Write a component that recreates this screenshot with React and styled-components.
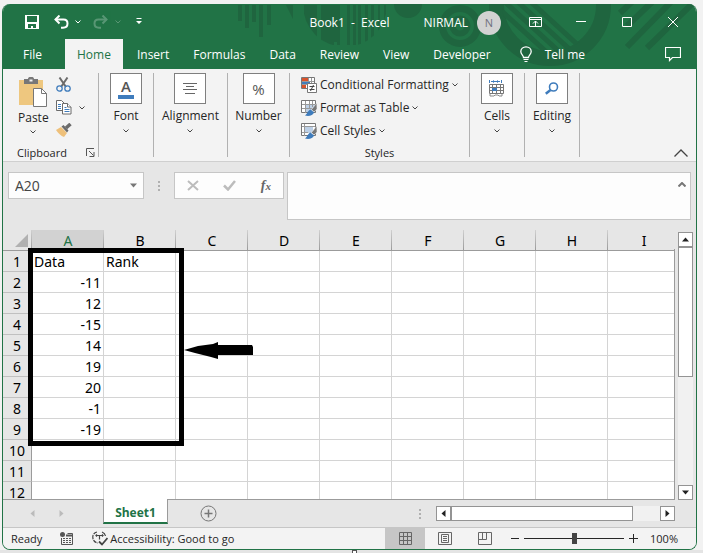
import React from "react";
import styled, { createGlobalStyle } from "styled-components";

const GlobalStyle = createGlobalStyle`
  * {
    box-sizing: border-box;
  }
  body {
    margin: 0;
    background: #f0f0f0;
    font-family: "Open Sans", "Noto Sans", sans-serif;
    font-size: 12px;
    color: #262626;
  }
  button, input, textarea {
    font: inherit;
    color: inherit;
    margin: 0;
    padding: 0;
    border: 0;
    background: none;
    outline: none;
  }
  button {
    display: flex;
    align-items: center;
    justify-content: center;
    white-space: nowrap;
  }
  svg {
    display: block;
    flex: none;
  }
`;

const Desktop = styled.div`
  position: relative;
  display: flex;
  height: 100vh;
  padding: 4px 6px 0 2px;
  background: #f2f2f2;
  border-bottom: 3px solid #e4e4e4;
`;

const Window = styled.div`
  flex: 1;
  min-width: 0;
  display: flex;
  flex-direction: column;
  border: 1px solid #217346;
  border-top: 0;
  border-radius: 8px;
  overflow: hidden;
  background: #e6e6e6;
`;

const Header = styled.header`
  position: relative;
  background: #217346;
  color: white;
`;

const Pattern = styled.svg`
  position: absolute;
  top: 0;
  right: 0;
`;

const TitleBar = styled.div`
  position: relative;
  display: grid;
  grid-template-columns: 1fr auto 1fr;
  align-items: center;
  height: 35px;
`;

const QuickAccess = styled.div`
  display: flex;
  align-items: center;
  padding-left: 22px;
`;

const IconButton = styled.button`
  width: ${(props) => props.$w || 16}px;
  height: 20px;
  margin-left: ${(props) => props.$ml || 0}px;
  opacity: ${(props) => (props.disabled ? 0.25 : 1)};
`;

const DocTitle = styled.h1`
  margin: 0;
  padding-top: 2px;
  font-size: 12px;
  font-weight: 400;
  white-space: pre;
`;

const WindowControls = styled.div`
  display: flex;
  align-items: center;
  justify-content: flex-end;
  padding-right: 15px;
`;

const UserName = styled.span`
  padding-top: 2px;
`;

const Avatar = styled.span`
  display: flex;
  align-items: center;
  justify-content: center;
  width: 24px;
  height: 24px;
  margin: 2px 26px 0 9px;
  border-radius: 50%;
  background: #d2d2d2;
  color: #707080;
  font-size: 11px;
`;

const Tabs = styled.nav`
  position: relative;
  display: flex;
  align-items: stretch;
  height: 30px;
  padding-left: 8px;
`;

const Tab = styled.button`
  padding: 0 12px;
  margin: ${(props) => (props.$active ? "0 2px 0 11px" : "0")};
  background: ${(props) => (props.$active ? "#f3f3f3" : "none")};
  color: ${(props) => (props.$active ? "#217346" : "white")};
`;

const TellMe = styled.button`
  gap: 13px;
  margin-left: 17px;
`;

const CommentButton = styled.button`
  margin-left: auto;
  padding-right: 15px;
`;

const Ribbon = styled.section`
  display: flex;
  height: 93px;
  padding: 4px 0;
  background: #f3f3f3;
  border-bottom: 1px solid #cfcfcf;
`;

const Group = styled.div`
  display: flex;
  flex-direction: column;
  align-items: center;
  width: ${(props) => props.$w}px;
  border-right: 1px solid #b1b1b1;
`;

const BigButton = styled.button`
  flex-direction: column;
  line-height: 16px;
`;

const IconBox = styled.span`
  display: flex;
  align-items: center;
  justify-content: center;
  width: 32px;
  height: 31px;
  margin-bottom: 4px;
  border: 1px solid #7f7f7f;
  background: white;
`;

const CaretWrap = styled.span`
  display: flex;
  align-items: center;
  height: 14px;
`;

const ClipboardTools = styled.div`
  display: flex;
  align-self: stretch;
  align-items: flex-start;
  padding-left: 15px;
  gap: 7px;
`;

const PasteButton = styled(BigButton)`
  padding-top: 4px;
  svg {
    margin-bottom: 3px;
  }
`;

const ToolColumn = styled.div`
  display: flex;
  flex-direction: column;
  align-items: flex-start;
`;

const ToolButton = styled.button`
  height: 23px;
  gap: ${(props) => props.$gap || 3}px;
`;

const GroupLabel = styled.div`
  display: flex;
  align-items: center;
  justify-content: center;
  align-self: stretch;
  height: 14px;
  margin-top: auto;
  margin-bottom: -2px;
  padding-left: ${(props) => props.$pl || 0}px;
  font-size: 11px;
`;

const Launcher = styled.button`
  margin-left: auto;
  margin-right: 3px;
`;

const StyleList = styled(ToolColumn)`
  align-self: stretch;
  padding-left: 11px;
`;

const CollapseButton = styled.button`
  align-self: flex-end;
  margin-left: auto;
  padding-right: 8px;
`;

const FormulaRow = styled.div`
  display: flex;
  align-items: flex-start;
  height: 68px;
  padding: 10px 5px 0;
`;

const NameBox = styled.div`
  display: flex;
  width: 136px;
  height: 27px;
  border: 1px solid #c6c6c6;
  background: #fdfdfd;
  input {
    flex: 1;
    min-width: 0;
    padding-left: 6px;
    font-size: 14px;
    color: #444;
  }
  button {
    width: 20px;
  }
`;

const Dots = styled.span`
  display: flex;
  flex-direction: column;
  justify-content: center;
  gap: 2px;
  height: 27px;
  margin: 0 ${(props) => props.$mx || 0}px;
  i {
    width: 2px;
    height: 2px;
    background: #b0b0b0;
  }
`;

const FormulaButtons = styled.div`
  display: flex;
  align-items: center;
  justify-content: space-between;
  width: 110px;
  height: 27px;
  margin-right: 3px;
  padding: 0 12px;
  border: 1px solid #c6c6c6;
  background: #fdfdfd;
`;

const FxLabel = styled.button`
  font-family: "Liberation Serif", serif;
  font-size: 14px;
  font-style: italic;
  font-weight: 700;
  line-height: 20px;
  color: #666;
  sub {
    font-size: 11px;
    vertical-align: baseline;
  }
`;

const FormulaField = styled.div`
  flex: 1;
  display: flex;
  align-items: flex-start;
  height: 48px;
  border: 1px solid #c6c6c6;
  background: #fdfdfd;
  textarea {
    flex: 1;
    height: 46px;
    resize: none;
  }
  button {
    padding: 9px 4px;
  }
`;

const SheetArea = styled.main`
  position: relative;
  flex: 1;
  min-height: 0;
  display: flex;
`;

const GridClip = styled.div`
  flex: 1;
  min-width: 0;
  overflow: hidden;
  border: 0 solid #9b9b9b;
  border-width: 0 1px 1px 0;
  border-image: linear-gradient(#e6e6e6 20px, #9b9b9b 20px) 1;
`;

const Grid = styled.table`
  table-layout: fixed;
  width: 677px;
  border-spacing: 0;
  background: white;
  font-family: "Noto Sans", sans-serif;
  font-size: 14px;
  line-height: 19px;
  color: black;
`;

const ColHead = styled.th`
  width: ${(props) => props.$w || 72}px;
  height: 21px;
  padding: 1px 0 0;
  font-weight: 400;
  color: ${(props) => (props.$selected ? "#217346" : "black")};
  background: linear-gradient(#d0d0d0, #9b9b9b) right / 1px 100% no-repeat
    ${(props) => (props.$selected ? "#d2d2d2" : "#e6e6e6")};
  border-bottom: 1px solid #9b9b9b;
`;

const Corner = styled.div`
  width: 0;
  margin-left: 12px;
  border-left: 13px solid transparent;
  border-bottom: 13px solid #b1b1b1;
`;

const RowHead = styled.th`
  height: 21px;
  padding: 1px 0 0;
  font-weight: 400;
  background: #e6e6e6;
  border-right: 1px solid #9b9b9b;
  border-bottom: 1px solid #c0c0c0;
`;

const Cell = styled.td`
  height: 21px;
  padding: 1px 2px 0;
  text-align: ${(props) => (props.$number ? "right" : "left")};
  border-right: 1px solid #d4d4d4;
  border-bottom: 1px solid #d4d4d4;
`;

// annotation drawn over the two data columns
const Highlight = styled.div`
  position: absolute;
  left: 25px;
  top: 18px;
  width: 156px;
  height: 198px;
  border: 5px solid black;
`;

const Arrow = styled.svg`
  position: absolute;
  left: 180px;
  top: 112px;
`;

const VScroll = styled.div`
  display: flex;
  flex-direction: column;
  width: 15px;
  margin: 2px 3px 0;
  background: #f1f1f1;
`;

const HScroll = styled.div`
  display: flex;
  width: 239px;
  height: 15px;
  margin-left: 15px;
  background: #f1f1f1;
`;

const ScrollButton = styled.button`
  flex: none;
  width: 15px;
  height: 15px;
  border: 1px solid #949494;
  background: white;
`;

const Thumb = styled.div`
  flex: 0 0 ${(props) => props.$size}px;
  margin: ${(props) => (props.$vertical ? "0 0 auto" : "0 auto 0 0")};
  border: 1px solid #949494;
  background: white;
`;

const SheetBar = styled.div`
  display: flex;
  align-items: center;
  height: 28px;
  padding-right: 21px;
  border-bottom: 1px solid #c6c6c6;
`;

const SheetNav = styled.div`
  display: flex;
  gap: 22px;
  width: 100px;
  padding-left: 26px;
`;

const SheetTab = styled.button`
  position: relative;
  align-self: flex-start;
  width: 65px;
  height: 25px;
  margin-top: -1px;
  padding-top: 3px;
  border: 1px solid #9b9b9b;
  border-top: 0;
  border-bottom: 2px solid #217346;
  background: white;
  color: #217346;
  font-weight: 700;
`;

const AddSheet = styled.button`
  margin-left: 32px;
  margin-right: auto;
`;

const StatusBar = styled.footer`
  display: flex;
  align-items: center;
  height: 21px;
  padding: 0 18px 0 8px;
  background: #f3f3f3;
  font-size: 11px;
`;

const StatusButton = styled.button`
  gap: 2px;
  margin-left: 18px;
`;

const ViewButtons = styled.div`
  display: flex;
  margin-left: auto;
`;

const ViewButton = styled.button`
  width: 40px;
  height: 21px;
  background: ${(props) => (props.$active ? "#c6c6c6" : "none")};
`;

const Zoom = styled.div`
  display: flex;
  align-items: center;
  gap: 5px;
  margin: 0 12px 0 6px;
  input {
    appearance: none;
    width: 100px;
    height: 11px;
    background: linear-gradient(#262626, #262626) center / 100% 1px no-repeat;
  }
  input::-webkit-slider-thumb {
    appearance: none;
    width: 5px;
    height: 11px;
    background: #444;
  }
`;

const Handle = styled.i`
  position: absolute;
  bottom: -3px;
  left: 50%;
  width: 5px;
  height: 3px;
  border: 1px solid #555;
  border-bottom: 0;
  background: white;
`;

const Caret = ({ color = "#444" }) => (
  <svg width="6" height="4" viewBox="0 0 6 4">
    <path d="M0.5 0.5L3 3L5.5 0.5" fill="none" stroke={color} />
  </svg>
);

const Triangle = ({ dir, color = "#222", size = 7 }) => {
  const turn = { up: 0, right: 90, down: 180, left: 270 }[dir];
  return (
    <svg width={size} height={size} viewBox="0 0 7 7">
      <path d="M0 5.5L3.5 1.5L7 5.5z" fill={color} transform={`rotate(${turn} 3.5 3.5)`} />
    </svg>
  );
};

const UndoIcon = () => (
  <svg width="15" height="14" viewBox="0 0 15 14" fill="none" stroke="white" strokeWidth="2">
    <path d="M5.5 0.5L1.5 4.5L5.5 8.5" />
    <path d="M1.5 4.5H9.5C12.2 4.5 13.5 6.3 13.5 8.5C13.5 11 11.8 12.7 9 12.7H7" />
  </svg>
);

const RedoIcon = () => (
  <svg width="15" height="14" viewBox="0 0 15 14" fill="none" stroke="white" strokeWidth="2">
    <path d="M9.5 0.5L13.5 4.5L9.5 8.5" />
    <path d="M13.5 4.5H5.5C2.8 4.5 1.5 6.3 1.5 8.5C1.5 11 3.2 12.7 6 12.7H8" />
  </svg>
);

const HeaderPattern = () => (
  <Pattern width="461" height="65" viewBox="235 4 461 65" fill="#1f653f" stroke="none">
    <clipPath id="dome">
      <circle cx="345" cy="5" r="42" />
    </clipPath>
    <clipPath id="disc">
      <circle cx="550" cy="4" r="48" />
    </clipPath>
    <path d="M238 5h4v16h-4zM245 5h4v23h-4zM252 5h4v17h-4zM259 5h4v32h-4zM267 5h4v20h-4z" />
    <path d="M286 5h7v14z" />
    <path
      clipPath="url(#dome)"
      d="M304 5h13v40h-13zM321 5h13v40h-13zM337 5h3v40h-3zM347 5h3v40h-3zM353 5h3v40h-3zM358 5h3v40h-3zM365 5h3v40h-3zM371 5h3v40h-3zM378 5h2v40h-2zM384 5h2v40h-2z"
    />
    <path d="M327 5h13v37h-13z" />
    <circle cx="408" cy="4" r="14" />
    <g fill="none" stroke="#1f653f">
      <circle cx="460" cy="26" r="17.5" strokeWidth="7" />
      <circle cx="460" cy="26" r="7.5" strokeWidth="6" />
      <circle cx="550" cy="5" r="53.5" strokeWidth="15" />
      <g strokeWidth="5" clipPath="url(#disc)">
        <path d="M494 4l60 55M505 2l60 55M518 2l60 55M531 2l60 55" />
      </g>
      <g strokeWidth="6">
        <path d="M634 0L620 13M652 2L627 26M671 2L627 47M694 2L647 48" />
      </g>
    </g>
  </Pattern>
);

const PasteIcon = () => (
  <svg width="28" height="30" viewBox="0 0 28 30">
    <path d="M0 3h24v25H0z" fill="#eec77f" />
    <path d="M5 7V2h4c0-3 6-3 6 0h4v5z" fill="#777" />
    <path d="M10.500 2.500h3v2h-3z" fill="#f3f3f3" />
    <path d="M14.500 11.500h8l5 5v13h-13z" fill="white" stroke="#777" />
    <path d="M22.500 11.500v5h5" fill="none" stroke="#777" />
  </svg>
);

const CutIcon = () => (
  <svg width="15" height="15" viewBox="0 0 15 15" fill="none">
    <path d="M3.500 0.500L10 10M11.500 0.500L5 10" stroke="#6b6b6b" strokeWidth="2" />
    <circle cx="3.500" cy="11.500" r="2.700" stroke="#3f7cbc" strokeWidth="1.300" />
    <circle cx="11.500" cy="11.500" r="2.700" stroke="#3f7cbc" strokeWidth="1.300" />
  </svg>
);

const CopyIcon = () => (
  <svg width="16" height="15" viewBox="0 0 16 15" fill="white" stroke="#6b6b6b">
    <path d="M0.500 0.500h5l3 3v7h-8z" />
    <path d="M2 4.500h3M2 6.500h3M2 8.500h3" stroke="#3f7cbc" />
    <path d="M6.500 3.500h5l3.500 3.500v7h-8.500z" />
    <path d="M11.500 3.500v3.500h3.500" />
    <path d="M8.500 7.500h2M8.500 9.500h5M8.500 11.500h5" stroke="#3f7cbc" />
  </svg>
);

const PainterIcon = () => (
  <svg width="16" height="15" viewBox="0 0 16 15">
    <path d="M0 7L5 4L11 10L8 14C5 13 2 10 0 7z" fill="#eec07a" />
    <path d="M5.500 3.500L7.500 2L12.500 7.500L11 9.500z" fill="#6b6b6b" />
    <path d="M10 5L14.500 1" stroke="#6b6b6b" strokeWidth="3.500" />
  </svg>
);

const LauncherIcon = () => (
  <svg width="9" height="9" viewBox="0 0 9 9" fill="none" stroke="#555">
    <path d="M0.500 8V0.500H8M3 3L7.500 7.500M8 4v4.500H3.500" />
  </svg>
);

const FontIcon = styled.span`
  width: 16px;
  border-bottom: 4px solid #3f7cbc;
  font-size: 15px;
  font-weight: 600;
  line-height: 17px;
  text-align: center;
  color: #555;
`;

const AlignIcon = () => (
  <svg width="16" height="12" viewBox="0 0 16 12" stroke="#666">
    <path d="M1 0.500h14M4 3.500h8M1 6.500h14M3 10.500h10" />
  </svg>
);

const PercentIcon = styled.span`
  font-size: 15px;
  color: #555;
`;

const ConditionalIcon = () => (
  <svg width="16" height="16" viewBox="0 0 16 16">
    <path d="M0.500 0.500h13v11h-13z" fill="white" stroke="#777" />
    <path d="M1 1h6v3H1zM1 8h4v3H1z" fill="#d9532c" />
    <path d="M1 5h8v2H1z" fill="#3f7cbc" />
    <path d="M7.500 1v3M10.500 1v5M1 4.500h12M1 7.500h5" stroke="#999" />
    <path d="M6.500 6.500h9v9h-9z" fill="white" stroke="#777" />
    <path d="M8.500 9.500h5M8.500 12.500h5M12.500 8L9.500 14" stroke="#444" fill="none" />
  </svg>
);

const TableIcon = ({ cell }) => (
  <svg width="16" height="16" viewBox="0 0 16 16">
    <path d="M0.500 0.500h14v12h-14z" fill="white" stroke="#777" />
    {cell ? (
      <path d="M4 4h8v6H4z" fill="#bdd0e6" />
    ) : (
      <path d="M5 5h9v7H5z" fill="#bdd0e6" />
    )}
    <path
      d={cell ? "M1 3.500h13M3.500 1v12M1 9.500h6" : "M1 4.500h13M4.500 1v12M1 8.500h10M8.500 1v8M11.500 1v6"}
      stroke="#999"
    />
    <path d="M15.800 3L10.500 9.500L13 12L16 9z" fill="#777" stroke="#f3f3f3" strokeWidth="0.500" />
    <path d="M4 15.500C6.500 14 6.500 10.500 9.500 9.500L13 12.500C12 15.500 8 16.500 4 15.500z" fill="#3f7cbc" />
  </svg>
);

const CellsIcon = () => (
  <svg width="16" height="17" viewBox="0 0 16 17" fill="none">
    <path d="M0.500 0v3M12.500 0v3M2 1.500h9M5 0.500L3.500 1.500L5 2.500M8 0.500L9.500 1.500L8 2.500" stroke="#3f7cbc" />
    <path d="M0.500 4.500h14v9h-14zM0.500 7.500h14M0.500 10.500h14M3.500 4.500v9M7.500 4.500v9M11.500 4.500v9" stroke="#777" />
    <path d="M3 8h5v3H3z" fill="#3f7cbc" />
    <path d="M1 14v2h4l1-1h3l1 1h3v-2" stroke="#888" />
  </svg>
);

const FindIcon = () => (
  <svg width="14" height="13" viewBox="0 0 14 13" fill="none" stroke="#3f7cbc">
    <circle cx="8.500" cy="5" r="4" strokeWidth="1.600" />
    <path d="M5.500 8L0.800 11.700" strokeWidth="2.500" />
  </svg>
);

const MacroIcon = () => (
  <svg width="14" height="13" viewBox="0 0 14 13" fill="none" stroke="#555">
    <path d="M1.500 6v6.500h11v-11h-5" />
    <path d="M6 3.500h7" strokeWidth="2" />
    <path d="M3 6.500h2M6 6.500h2M9 6.500h2M3 8.500h2M6 8.500h2M9 8.500h2M3 10.500h2M6 10.500h2M9 10.500h2" />
    <circle cx="2.500" cy="2.500" r="2.500" fill="#555" stroke="none" />
  </svg>
);

const AccessIcon = () => (
  <svg width="16" height="15" viewBox="0 0 16 15" fill="none" stroke="#444" strokeWidth="1.200">
    <path d="M5 1C2.500 1.500 0.800 3.500 0.800 6C0.800 9.500 3 11.500 6 12" strokeDasharray="4 1" />
    <path d="M10 1C12 1.800 13.200 3.200 13.500 5" />
    <path d="M4 4.500h7M5 3.500L4 4.500L5 5.500M10 3.500L11 4.500L10 5.500M7.500 4.500v4" />
    <path d="M7 10.500L10 13.500L15.500 7" strokeWidth="1.800" />
  </svg>
);

const tabs = ["File", "Home", "Insert", "Formulas", "Data", "Review", "View", "Developer"];
const columns = ["A", "B", "C", "D", "E", "F", "G", "H", "I"];
const data = ["Data", -11, 12, -15, 14, 19, 20, -1, -19, "", "", ""];

const RibbonGroup = ({ w, label, icon }) => (
  <Group $w={w}>
    <BigButton>
      <IconBox>{icon}</IconBox>
      {label}
      <CaretWrap>
        <Caret />
      </CaretWrap>
    </BigButton>
  </Group>
);

const TitleRow = () => (
  <TitleBar>
    <QuickAccess>
      <IconButton $w={14} aria-label="Save">
        <svg width="14" height="14" viewBox="0 0 14 14">
          <path d="M0 0h14v14H0z" fill="white" />
          <path d="M2 1h10v6H2zM3 9h8v4H8v-2H6v2H3z" fill="#217346" />
        </svg>
      </IconButton>
      <IconButton $w={15} $ml={15} aria-label="Undo">
        <UndoIcon />
      </IconButton>
      <IconButton $w={6} $ml={6} aria-label="Undo list">
        <Caret color="white" />
      </IconButton>
      <IconButton $w={15} $ml={12} aria-label="Redo" disabled>
        <RedoIcon />
      </IconButton>
      <IconButton $w={6} $ml={7} aria-label="Redo list" disabled>
        <Caret color="white" />
      </IconButton>
      <IconButton $w={6} $ml={15} aria-label="Customize">
        <svg width="6" height="7" viewBox="0 0 6 7">
          <path d="M0.500 0h5v1h-5zM0 3h6L3 6z" fill="white" />
        </svg>
      </IconButton>
    </QuickAccess>
    <DocTitle>{"Book1  -  Excel"}</DocTitle>
    <WindowControls>
      <UserName>NIRMAL</UserName>
      <Avatar>N</Avatar>
      <IconButton aria-label="Ribbon display">
        <svg width="13" height="10" viewBox="0 0 13 10" fill="none" stroke="white">
          <path d="M0.500 0.500h12v9h-12zM1 2.500h11M6.500 9V4M4 6.500L6.500 4L9 6.500" />
        </svg>
      </IconButton>
      <IconButton $ml={30} aria-label="Minimize">
        <svg width="10" height="10" viewBox="0 0 10 10">
          <path d="M0 4.500h10" stroke="white" />
        </svg>
      </IconButton>
      <IconButton $ml={30} aria-label="Maximize">
        <svg width="10" height="10" viewBox="0 0 10 10">
          <path d="M0.500 0.500h9v9h-9z" fill="none" stroke="white" />
        </svg>
      </IconButton>
      <IconButton $ml={30} aria-label="Close">
        <svg width="10" height="10" viewBox="0 0 10 10">
          <path d="M0 0L10 10M10 0L0 10" stroke="white" />
        </svg>
      </IconButton>
    </WindowControls>
  </TitleBar>
);

const RibbonPanel = () => (
  <Ribbon>
    <Group $w={96}>
      <ClipboardTools>
        <PasteButton>
          <PasteIcon />
          Paste
          <CaretWrap>
            <Caret />
          </CaretWrap>
        </PasteButton>
        <ToolColumn>
          <ToolButton aria-label="Cut">
            <CutIcon />
          </ToolButton>
          <ToolButton aria-label="Copy" $gap={7}>
            <CopyIcon />
            <Caret />
          </ToolButton>
          <ToolButton aria-label="Format Painter">
            <PainterIcon />
          </ToolButton>
        </ToolColumn>
      </ClipboardTools>
      <GroupLabel $pl={14}>
        Clipboard
        <Launcher aria-label="Clipboard options">
          <LauncherIcon />
        </Launcher>
      </GroupLabel>
    </Group>
    <RibbonGroup w={55} label="Font" icon={<FontIcon>A</FontIcon>} />
    <RibbonGroup w={74} label="Alignment" icon={<AlignIcon />} />
    <RibbonGroup w={62} label="Number" icon={<PercentIcon>%</PercentIcon>} />
    <Group $w={180}>
      <StyleList>
        <ToolButton>
          <ConditionalIcon />
          Conditional Formatting
          <Caret />
        </ToolButton>
        <ToolButton>
          <TableIcon />
          Format as Table
          <Caret />
        </ToolButton>
        <ToolButton>
          <TableIcon cell />
          Cell Styles
          <Caret />
        </ToolButton>
      </StyleList>
      <GroupLabel>Styles</GroupLabel>
    </Group>
    <RibbonGroup w={55} label="Cells" icon={<CellsIcon />} />
    <RibbonGroup w={55} label="Editing" icon={<FindIcon />} />
    <CollapseButton aria-label="Collapse ribbon">
      <svg width="14" height="8" viewBox="0 0 14 8">
        <path d="M0.500 7.500L7 1L13.500 7.500" fill="none" stroke="#444" strokeWidth="1.300" />
      </svg>
    </CollapseButton>
  </Ribbon>
);

const FormulaBar = () => (
  <FormulaRow>
    <NameBox>
      <input aria-label="Name Box" defaultValue="A20" />
      <button aria-label="Names">
        <Triangle dir="down" color="#777" />
      </button>
    </NameBox>
    <Dots $mx={14}>
      <i />
      <i />
      <i />
    </Dots>
    <FormulaButtons>
      <button aria-label="Cancel">
        <svg width="12" height="11" viewBox="0 0 12 11">
          <path d="M1 1L11 10M11 1L1 10" stroke="#bcbcbc" strokeWidth="2" />
        </svg>
      </button>
      <button aria-label="Enter">
        <svg width="13" height="11" viewBox="0 0 13 11">
          <path d="M1 5.500L5 9.500L12 1" fill="none" stroke="#bcbcbc" strokeWidth="2.500" />
        </svg>
      </button>
      <FxLabel aria-label="Insert function">
        f<sub>x</sub>
      </FxLabel>
    </FormulaButtons>
    <FormulaField>
      <textarea aria-label="Formula bar" />
      <button aria-label="Expand formula bar">
        <svg width="8" height="5" viewBox="0 0 8 5">
          <path d="M0.500 4.500L4 1L7.500 4.500" fill="none" stroke="#777" strokeWidth="2" />
        </svg>
      </button>
    </FormulaField>
  </FormulaRow>
);

const Sheet = () => (
  <SheetArea>
    <GridClip>
      <Grid>
        <thead>
          <tr>
            <ColHead $w={29}>
              <Corner />
            </ColHead>
            {columns.map((c) => (
              <ColHead key={c} $selected={c === "A"}>
                {c}
              </ColHead>
            ))}
          </tr>
        </thead>
        <tbody>
          {data.map((value, i) => (
            <tr key={i}>
              <RowHead>{i + 1}</RowHead>
              {columns.map((c) => (
                <Cell key={c} $number={typeof value === "number"}>
                  {c === "A" && value}
                  {c === "B" && i === 0 && "Rank"}
                </Cell>
              ))}
            </tr>
          ))}
        </tbody>
      </Grid>
    </GridClip>
    <VScroll>
      <ScrollButton aria-label="Scroll up">
        <Triangle dir="up" />
      </ScrollButton>
      <Thumb $size={130} $vertical />
      <ScrollButton aria-label="Scroll down">
        <Triangle dir="down" />
      </ScrollButton>
    </VScroll>
    <Highlight />
    <Arrow width="71" height="17" viewBox="0 0 71 17">
      <path d="M1 8L15 4L30 2L35 0V3H69L70 5V13H35V17L28 15L12 11z" fill="black" />
    </Arrow>
  </SheetArea>
);

const SheetTabs = () => (
  <SheetBar>
    <SheetNav>
      <button aria-label="Previous sheet">
        <Triangle dir="left" color="#bbb" />
      </button>
      <button aria-label="Next sheet">
        <Triangle dir="right" color="#bbb" />
      </button>
    </SheetNav>
    <SheetTab>Sheet1</SheetTab>
    <AddSheet aria-label="New sheet">
      <svg width="17" height="17" viewBox="0 0 17 17" fill="none" stroke="#777">
        <circle cx="8.500" cy="8.500" r="7.500" />
        <path d="M4.500 8.500h8M8.500 4.500v8" strokeWidth="1.500" />
      </svg>
    </AddSheet>
    <Dots>
      <i />
      <i />
      <i />
    </Dots>
    <HScroll>
      <ScrollButton aria-label="Scroll left">
        <Triangle dir="left" />
      </ScrollButton>
      <Thumb $size={182} />
      <ScrollButton aria-label="Scroll right">
        <Triangle dir="right" />
      </ScrollButton>
    </HScroll>
  </SheetBar>
);

const Status = () => (
  <StatusBar>
    <span>Ready</span>
    <StatusButton aria-label="Record macro">
      <MacroIcon />
    </StatusButton>
    <StatusButton>
      <AccessIcon />
      Accessibility: Good to go
    </StatusButton>
    <ViewButtons>
      <ViewButton $active aria-label="Normal view">
        <svg width="13" height="13" viewBox="0 0 13 13" fill="none" stroke="#666">
          <path d="M0.500 0.500h12v12h-12zM4.500 0v13M8.500 0v13M0 4.500h13M0 8.500h13" />
        </svg>
      </ViewButton>
      <ViewButton aria-label="Page layout">
        <svg width="14" height="13" viewBox="0 0 14 13" fill="none" stroke="#666">
          <path d="M0.500 0.500h13v12h-13zM3.500 2.500h7v8h-7zM5 4.500h4M5 6.500h4M5 8.500h4" />
        </svg>
      </ViewButton>
      <ViewButton aria-label="Page break preview">
        <svg width="14" height="13" viewBox="0 0 14 13" fill="none" stroke="#666">
          <path d="M0.500 0.500h13v12h-13zM0.500 7.500h8v-7M4.500 0.500v7" />
        </svg>
      </ViewButton>
    </ViewButtons>
    <Zoom>
      <button aria-label="Zoom out">
        <svg width="8" height="9" viewBox="0 0 8 9">
          <path d="M0 4.500h8" stroke="#262626" />
        </svg>
      </button>
      <input type="range" aria-label="Zoom" min="0" max="100" defaultValue="50" />
      <button aria-label="Zoom in">
        <svg width="9" height="9" viewBox="0 0 9 9">
          <path d="M0 4.500h9M4.500 0v9" stroke="#262626" />
        </svg>
      </button>
    </Zoom>
    <span>100%</span>
  </StatusBar>
);

const App = () => {
  return (
    <Desktop>
      <GlobalStyle />
      <Window>
        <Header>
          <HeaderPattern />
          <TitleRow />
          <Tabs>
            {tabs.map((tab) => (
              <Tab key={tab} $active={tab === "Home"}>
                {tab}
              </Tab>
            ))}
            <TellMe>
              <svg width="12" height="17" viewBox="0 0 12 17" fill="none" stroke="white">
                <path d="M3.500 11.500C3.500 9 0.800 8.500 0.800 5.500C0.800 2.800 3 0.800 6 0.800C9 0.800 11.200 2.800 11.200 5.500C11.200 8.500 8.500 9 8.500 11.500z" strokeWidth="1.300" />
                <path d="M3.500 13.500h5M4.500 15.500h3" />
              </svg>
              Tell me
            </TellMe>
            <CommentButton aria-label="Comments">
              <svg width="16" height="15" viewBox="0 0 16 15">
                <path d="M0.500 0.500h15v10h-8l-3 3v-3h-4z" fill="none" stroke="white" strokeWidth="1.200" />
              </svg>
            </CommentButton>
          </Tabs>
        </Header>
        <RibbonPanel />
        <FormulaBar />
        <Sheet />
        <SheetTabs />
        <Status />
      </Window>
      <Handle />
    </Desktop>
  );
};

export default App;
